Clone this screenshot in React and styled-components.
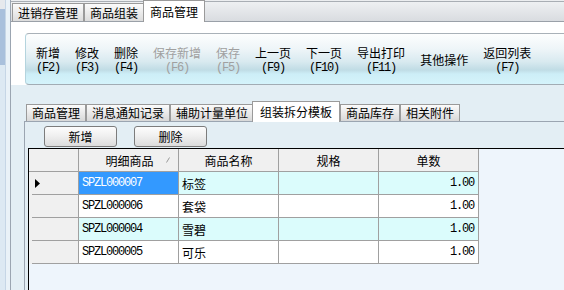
import React from 'react';
import styled, { createGlobalStyle } from 'styled-components';

const GlobalStyle = createGlobalStyle`
  html, body { margin: 0; padding: 0; }
  body {
    width: 564px; height: 290px; overflow: hidden;
    font-family: "Noto Sans CJK SC", "Liberation Sans", sans-serif;
    font-size: 12px; color: #000; background: #e3eef4;
  }
`;

const Frame = styled.div`
  display: flex; width: 564px; height: 290px; overflow: hidden;
`;

const SideRail = styled.div`
  width: 10px; flex: none; display: flex; background: #eaf2f8;
`;
const SideList = styled.div`
  width: 5px; background: #dde9f3; border-right: 1px solid #c6d6e6;
  display: flex; flex-direction: column;
`;
const SideCap = styled.div` height: 9px; background: #e6e9ed; `;
const SideSelected = styled.div` height: 56px; background: #a9c0dc; `;

const Main = styled.div`
  flex: 1; min-width: 0; border-left: 1px solid #9ba5b1;
  display: flex; flex-direction: column;
`;

const TopStrip = styled.div`
  height: 22px; box-sizing: border-box; flex: none;
  display: flex; align-items: flex-end; padding-left: 1px;
  border-bottom: 1px solid #9aa0a8;
  background: linear-gradient(to bottom, #eceef0 0, #eceef0 1px, #a9aeb4 1px, #a9aeb4 2px, #eef0f2 2px, #d9dce0 100%);
`;

const TopTab = styled.div`
  box-sizing: border-box; margin-bottom: -1px;
  height: ${p => (p.$active ? '22px' : '19px')};
  padding: 0 ${p => (p.$active ? '6px' : '5px')};
  margin-left: ${p => (p.$active ? '-1px' : '0')};
  border: 1px solid #9a9a9a;
  border-bottom: ${p => (p.$active ? 'none' : '1px solid #9aa0a8')};
  background: ${p => (p.$active ? '#fff' : 'linear-gradient(to bottom, #fbfbfb, #dcdcdc)')};
  display: flex; align-items: center; white-space: nowrap; line-height: 14px;
  position: relative; z-index: ${p => (p.$active ? 1 : 0)};
`;

const WhiteBand = styled.div`
  background: #fff; padding: 11px 0 0 14px; flex: none;
`;

const Toolbar = styled.div`
  height: 52px; box-sizing: border-box;
  border-top: 1px solid #a9b1b8; border-bottom: 1px solid #a2acb4;
  border-left: 1px solid #b4d4de;
  border-top-left-radius: 4px; border-bottom-left-radius: 4px;
  background: linear-gradient(to bottom, #fdfefe 0%, #eef5f8 30%, #d9eaf0 55%, #c0dce5 72%, #cdeef7 80%, #d5f3fb 100%);
  display: flex; align-items: center; gap: 15px; padding-left: 10px;
  white-space: nowrap;
`;

const ToolButton = styled.div`
  display: flex; flex-direction: column; align-items: center;
  color: ${p => (p.$disabled ? '#a0a0a0' : '#000')};
  padding-top: 1px;
`;
const ToolLabel = styled.span` font-size: 12px; line-height: normal; `;
const ToolKey = styled.span`
  font-family: "Liberation Mono", monospace; font-size: 12px;
  letter-spacing: -1.2px; line-height: normal;
`;

const Content = styled.div`
  flex: 1; min-height: 0; display: flex; flex-direction: column;
  padding: 15px 0 0 13px; background: #e3eef4;
`;

const InnerStrip = styled.div`
  display: flex; align-items: flex-end; padding-left: 2px; height: 21px; flex: none;
`;

const InnerTab = styled.div`
  box-sizing: border-box;
  height: ${p => (p.$active ? '21px' : '17px')};
  padding: 0 ${p => (p.$active ? '7px' : '5px')};
  margin-left: ${p => (p.$active ? '-2px' : '0')};
  margin-bottom: ${p => (p.$active ? '-1px' : '0')};
  border: 1px solid #9a9a9a; border-bottom: none;
  background: ${p => (p.$active ? '#fff' : 'linear-gradient(to bottom, #fbfbfb, #d8d8d8)')};
  display: flex; align-items: center; white-space: nowrap; line-height: 14px;
  position: relative; z-index: ${p => (p.$active ? 1 : 0)};
`;

const Panel = styled.div`
  flex: 1; min-height: 0; display: flex; flex-direction: column;
  border-top: 1px solid #9ba5b1; border-left: 1px solid #9ba5b1;
  padding: 4px 0 0 3px; background: #e3eef4;
`;

const ButtonRow = styled.div`
  display: flex; gap: 17px; padding-left: 16px; margin-bottom: 1px;
`;

const Button = styled.div`
  width: 73px; height: 21px; box-sizing: border-box;
  border: 1px solid #7c7c7c; border-radius: 3px;
  background: linear-gradient(to bottom, #fdfdfd 0%, #f0f0f0 45%, #dcdcdc 100%);
  display: flex; align-items: center; justify-content: center;
`;

const Grid = styled.div`
  flex: 1; min-height: 0; border-top: 1px solid #000; border-left: 1px solid #000;
  background: #eef5fc;
  display: grid; grid-template-columns: 50px 100px 100px 100px 100px;
  grid-auto-rows: 23px; align-content: start;
`;

const HeadCell = styled.div`
  box-sizing: border-box; background: #f0f0f0;
  border-right: 1px solid #a0a0a0; border-bottom: 1px solid #a0a0a0;
  display: flex; align-items: center; justify-content: center; gap: 12px;
  padding-left: ${p => (p.$sort ? '18px' : '0')};
`;

const RowHead = styled.div`
  box-sizing: border-box; border-right: 1px solid #a0a0a0;
  background: linear-gradient(#a0a0a0, #a0a0a0) no-repeat right 0 bottom 0 / 46px 1px, #f0f0f0;
  display: flex; align-items: center; padding-left: 6px;
`;

const Cell = styled.div`
  box-sizing: border-box;
  border-right: 1px solid #a0a0a0; border-bottom: 1px solid #a0a0a0;
  background: ${p => (p.$selected ? '#3399ff' : p.$alt ? '#dbfcfc' : '#fff')};
  color: ${p => (p.$selected ? '#fff' : '#000')};
  display: flex; align-items: center;
  justify-content: ${p => (p.$right ? 'flex-end' : 'flex-start')};
  padding: 0 ${p => (p.$right ? '4px' : '3px')} 0 3px;
  font-family: ${p => (p.$mono ? '"Liberation Mono", monospace' : 'inherit')};
  font-size: 12px;
  letter-spacing: ${p => (p.$mono ? '-1.2px' : '0')};
  white-space: nowrap;
`;

const Pointer = () => (
  <svg width="5" height="9" viewBox="0 0 5 9"><path d="M0 0 L5 4.5 L0 9 Z" fill="#000" /></svg>
);
const SortMark = () => (
  <svg width="4" height="6" viewBox="0 0 4 6"><path d="M0.5 5.5 L3.5 0.5" stroke="#9a9a9a" strokeWidth="1" /></svg>
);

const tools = [
  { label: '新增', key: '(F2)' },
  { label: '修改', key: '(F3)' },
  { label: '删除', key: '(F4)' },
  { label: '保存新增', key: '(F6)', disabled: true },
  { label: '保存', key: '(F5)', disabled: true },
  { label: '上一页', key: '(F9)' },
  { label: '下一页', key: '(F10)' },
  { label: '导出打印', key: '(F11)' },
  { label: '其他操作' },
  { label: '返回列表', key: '(F7)' },
];

const innerTabs = ['商品管理', '消息通知记录', '辅助计量单位', '组装拆分模板', '商品库存', '相关附件'];

const rows = [
  { code: 'SPZL000007', name: '标签', qty: '1.00' },
  { code: 'SPZL000006', name: '套袋', qty: '1.00' },
  { code: 'SPZL000004', name: '雪碧', qty: '1.00' },
  { code: 'SPZL000005', name: '可乐', qty: '1.00' },
];

export default function App() {
  return (
    <>
      <GlobalStyle />
      <Frame>
        <SideRail>
          <SideList>
            <SideCap />
            <SideSelected />
          </SideList>
        </SideRail>
        <Main>
          <TopStrip>
            <TopTab>进销存管理</TopTab>
            <TopTab>商品组装</TopTab>
            <TopTab $active>商品管理</TopTab>
          </TopStrip>
          <WhiteBand>
            <Toolbar>
              {tools.map(t => (
                <ToolButton key={t.label} $disabled={t.disabled}>
                  <ToolLabel>{t.label}</ToolLabel>
                  {t.key && <ToolKey>{t.key}</ToolKey>}
                </ToolButton>
              ))}
            </Toolbar>
          </WhiteBand>
          <Content>
            <InnerStrip>
              {innerTabs.map(t => (
                <InnerTab key={t} $active={t === '组装拆分模板'}>{t}</InnerTab>
              ))}
            </InnerStrip>
            <Panel>
              <ButtonRow>
                <Button>新增</Button>
                <Button>删除</Button>
              </ButtonRow>
              <Grid>
                <HeadCell />
                <HeadCell $sort>明细商品<SortMark /></HeadCell>
                <HeadCell>商品名称</HeadCell>
                <HeadCell>规格</HeadCell>
                <HeadCell>单数</HeadCell>
                {rows.map((r, i) => (
                  <React.Fragment key={r.code}>
                    <RowHead>{i === 0 && <Pointer />}</RowHead>
                    <Cell $mono $alt={i % 2 === 0} $selected={i === 0}>{r.code}</Cell>
                    <Cell $alt={i % 2 === 0}>{r.name}</Cell>
                    <Cell $alt={i % 2 === 0} />
                    <Cell $mono $right $alt={i % 2 === 0}>{r.qty}</Cell>
                  </React.Fragment>
                ))}
              </Grid>
            </Panel>
          </Content>
        </Main>
      </Frame>
    </>
  );
}
